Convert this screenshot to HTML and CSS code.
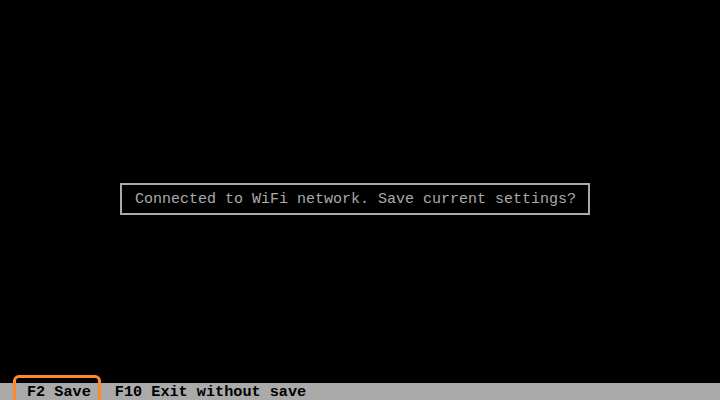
FILE: index.html
```html
<!DOCTYPE html>
<html lang="en">

<head>
    <meta charset="UTF-8">
    <meta name="viewport" content="width=device-width, initial-scale=1.0">
    <title>WiFi Setup</title>
    <link rel="stylesheet" href="styles.css">
</head>

<body>
    <div class="screen">
        <div class="dialog">Connected to WiFi network. Save current settings?</div>
    </div>

    <div class="keybar">
        <span class="key key-active">F2 Save</span>
        <span class="key">F10 Exit without save</span>
    </div>
</body>

</html>
```

FILE: styles.css
```css
body {
    margin: 0;
    width: 720px;
    height: 400px;
    background: #000;
    color: #aaa;
    font-family: "Liberation Mono", "DejaVu Sans Mono", monospace;
    font-size: 15px;
    line-height: 16px;
    display: flex;
    flex-direction: column;
    overflow: hidden;
}

.screen {
    flex: 1;
    padding: 183px 0 0 120px;
}

.dialog {
    width: 441px;
    padding: 7px 12px 5px 13px;
    border: 2px solid #aaa;
    white-space: nowrap;
}

.keybar {
    height: 17px;
    background: #aaa;
    color: #000;
    font-weight: bold;
    font-size: 15.2px;
    line-height: 18px;
    display: flex;
    gap: 24px;
    padding-left: 27px;
}

.key {
    position: relative;
    white-space: pre;
}

/* highlight around the selected key */
.key-active::after {
    content: "";
    position: absolute;
    left: -14px;
    right: -10px;
    top: -8px;
    height: 30px;
    border: 3px solid #ff8a2a;
    border-radius: 6px;
}
```
